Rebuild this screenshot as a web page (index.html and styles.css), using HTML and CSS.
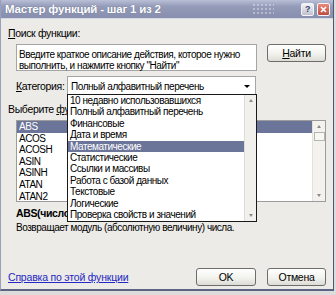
FILE: index.html
```html
<!doctype html>
<html lang="ru">
<head>
  <meta charset="utf-8">
  <title>Мастер функций</title>
  <link rel="stylesheet" href="styles.css">
</head>
<body>
  <div class="window">
    <div class="titlebar">
      <span class="title">Мастер функций - шаг 1 из 2</span>
      <span class="dots"></span>
      <span class="tbtn help">?</span>
      <span class="tbtn close">
        <svg width="7" height="7" viewBox="0 0 7 7"><path d="M1 1L6 6M6 1L1 6" stroke="#fff" stroke-width="1.6"/></svg>
      </span>
    </div>

    <div class="content">
      <div class="label"><u>П</u>оиск функции:</div>
      <div class="search-row">
        <div class="search-box">Введите краткое описание действия, которое нужно выполнить, и нажмите кнопку "Найти"</div>
        <button class="btn find"><u>Н</u>айти</button>
      </div>

      <div class="cat-row">
        <span class="cat-label"><u>К</u>атегория:</span>
        <div class="combo">Полный алфавитный перечень<span class="arrow"></span></div>
      </div>

      <div class="label pick">Выберите <u>ф</u>ункцию:</div>
      <div class="fn-list">
        <div class="fn-items">
          <div class="item sel">ABS</div>
          <div class="item">ACOS</div>
          <div class="item">ACOSH</div>
          <div class="item">ASIN</div>
          <div class="item">ASINH</div>
          <div class="item">ATAN</div>
          <div class="item">ATAN2</div>
        </div>
        <div class="vscroll">
          <span class="sarrow up"></span>
          <span class="thumb"></span>
          <span class="track"></span>
          <span class="sarrow down"></span>
        </div>
      </div>

      <div class="syntax">ABS(число)</div>
      <div class="desc">Возвращает модуль (абсолютную величину) числа.</div>

      <div class="footer">
        <a href="#" class="help-link">Справка по этой функции</a>
        <button class="btn ok">OK</button>
        <button class="btn cancel">Отмена</button>
      </div>
    </div>

    <!-- open category dropdown -->
    <div class="popup">
      <div class="popup-items">
        <div class="opt">10 недавно использовавшихся</div>
        <div class="opt">Полный алфавитный перечень</div>
        <div class="opt">Финансовые</div>
        <div class="opt">Дата и время</div>
        <div class="opt sel">Математические</div>
        <div class="opt">Статистические</div>
        <div class="opt">Ссылки и массивы</div>
        <div class="opt">Работа с базой данных</div>
        <div class="opt">Текстовые</div>
        <div class="opt">Логические</div>
        <div class="opt">Проверка свойств и значений</div>
      </div>
      <div class="popup-scroll">
        <span class="sarrow up"></span>
        <span class="sarrow down"></span>
      </div>
    </div>
  </div>
</body>
</html>
```

FILE: styles.css
```css
body {
  margin: 0;
  background: #dcdcdc;
  font-family: "Liberation Sans", Arial, sans-serif;
  font-size: 10.5px;
  letter-spacing: -0.35px;
  color: #000;
}
u {
  text-decoration: underline;
}
.window {
  position: relative;
  width: 334px;
  height: 291px;
  box-sizing: border-box;
  border-left: 1px solid #9aa0b8;
  border-right: 1px solid #4f5672;
  border-bottom: 2px solid #5d6483;
  background: #ecebe7;
}
.titlebar {
  height: 18px;
  display: flex;
  align-items: center;
  padding: 0 3px 0 4px;
  background: linear-gradient(#b9bfd6, #959cb9 35%, #878eae);
  border-bottom: 1px solid #d6d8e2;
}
.title {
  flex: 1;
  color: #fff;
  font-weight: bold;
  font-size: 11.5px;
  letter-spacing: -0.2px;
  text-shadow: 0 0 1px #5b627f;
}
.dots {
  width: 22px;
  height: 12px;
  margin-right: 24px;
  background:
    radial-gradient(circle, rgba(255,255,255,0.35) 1px, transparent 1.5px) 0 0 / 4px 4px;
}
.tbtn {
  width: 11px;
  height: 11px;
  margin-left: 3px;
  border: 1px solid #f4f4f8;
  border-radius: 2px;
  display: flex;
  align-items: center;
  justify-content: center;
  font-size: 9px;
  font-weight: bold;
}
.help {
  background: linear-gradient(#f2f3f6, #bfc2d0);
  color: #394166;
}
.close {
  background: linear-gradient(#e98a7c, #bd4c3e);
}

/* text inside boxes and lists is set a bit tighter */
.search-box, .combo, .item, .opt, .desc {
  font-size: 10px;
  letter-spacing: -0.45px;
}

.content {
  padding: 0 7px;
}
.label {
  margin-top: 8px;
  line-height: 13px;
}
.search-row {
  display: flex;
  align-items: flex-start;
  margin-top: 4px;
  padding-left: 8px;
}
.search-box {
  width: 241px;
  height: 27px;
  box-sizing: border-box;
  padding: 4px 2px 0;
  border: 1px solid #a5a5a5;
  background: #fff;
  line-height: 11px;
}
.btn {
  height: 18px;
  padding: 0;
  border: 1px solid #6d6d6d;
  border-radius: 3px;
  background: linear-gradient(#ffffff, #f1f1ec 60%, #dcdcd5);
  font-family: inherit;
  font-size: 10.5px;
  letter-spacing: -0.3px;
  color: #000;
}
.find {
  width: 59px;
  margin-left: 10px;
}
.cat-row {
  display: flex;
  align-items: center;
  margin-top: 5px;
  padding-left: 8px;
}
.cat-label {
  width: 51px;
}
.combo {
  position: relative;
  width: 189px;
  height: 20px;
  box-sizing: border-box;
  padding-left: 3px;
  border: 1px solid #a5a5a5;
  border-bottom: none;
  background: #fff;
  line-height: 19px;
}
.arrow {
  position: absolute;
  right: 5px;
  top: 8px;
  border-left: 3px solid transparent;
  border-right: 3px solid transparent;
  border-top: 3px solid #000;
}
.pick {
  width: 59px;
  margin-top: 7px;
  overflow: hidden;
  white-space: nowrap;
}
.fn-list {
  display: flex;
  width: 310px;
  height: 82px;
  box-sizing: border-box;
  margin: 4px 0 0 8px;
  border: 1px solid #9c9c9c;
  background: #fff;
}
.fn-items {
  flex: 1;
}
.item {
  height: 11.6px;
  padding-left: 2px;
  line-height: 11.6px;
}
.item.sel, .opt.sel {
  background: #6b7499;
  color: #fff;
}
.vscroll {
  width: 12px;
  display: flex;
  flex-direction: column;
  align-items: center;
  background: #f3f2ee;
  border-left: 1px solid #e2e1dc;
}
.sarrow {
  display: block;
  width: 0;
  height: 0;
  margin: 4px 0;
  border-left: 2.5px solid transparent;
  border-right: 2.5px solid transparent;
}
.sarrow.up {
  border-bottom: 3px solid #8a8a8a;
}
.sarrow.down {
  border-top: 3px solid #8a8a8a;
}
.thumb {
  width: 9px;
  height: 7px;
  border: 1px solid #b6b6b0;
  background: #f7f7f4;
}
.track {
  flex: 1;
}
.syntax {
  width: 51px;
  margin-top: 5px;
  padding-left: 8px;
  overflow: hidden;
  white-space: nowrap;
  line-height: 13px;
  font-weight: bold;
}
.desc {
  margin-top: 1px;
  padding-left: 8px;
  line-height: 13px;
}
.footer {
  display: flex;
  align-items: center;
  margin-top: 34px;
}
.help-link {
  flex: 1;
  color: #2528c4;
  letter-spacing: -0.2px;
  text-decoration: underline;
}
.ok {
  width: 60px;
}
.cancel {
  width: 59px;
  margin-left: 11px;
}

.popup {
  position: absolute;
  left: 66px;
  top: 94px;
  width: 190px;
  height: 128px;
  box-sizing: border-box;
  display: flex;
  border: 1px solid #1a1a1a;
  background: #fff;
}
.popup-items {
  flex: 1;
}
.opt {
  height: 11.4px;
  padding-left: 2px;
  line-height: 11.4px;
  white-space: nowrap;
}
.popup-scroll {
  width: 11px;
  display: flex;
  flex-direction: column;
  justify-content: space-between;
  align-items: center;
  background: #f1f0ec;
  border-left: 1px solid #dddcd6;
}
```
